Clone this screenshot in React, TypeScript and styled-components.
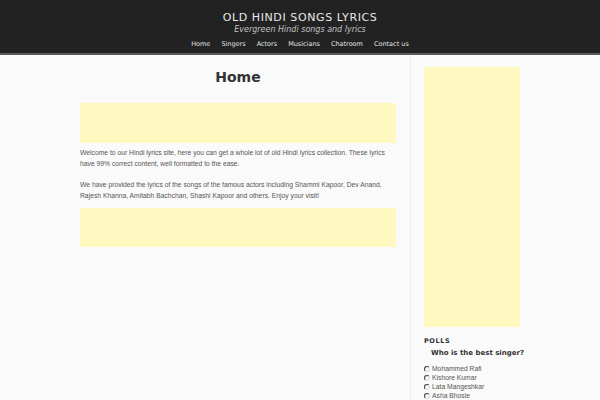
import styled, { createGlobalStyle } from "styled-components";

const GlobalStyle = createGlobalStyle`
  html, body {
    margin: 0;
    padding: 0;
    background: #fafafa;
  }
  body {
    font-family: "DejaVu Sans", sans-serif;
    overflow: hidden;
    -webkit-font-smoothing: antialiased;
  }
`;

const Header = styled.header`
  background: #222222;
  border-bottom: 2px solid #5a5a5a;
  height: 55px;
  display: flex;
  flex-direction: column;
  align-items: center;
  box-sizing: border-box;
  padding-top: 11px;
`;

const SiteTitle = styled.h1`
  margin: 0;
  font-size: 11px;
  font-weight: normal;
  letter-spacing: 0.6px;
  line-height: 13px;
  color: #e8e8e8;
`;

const Tagline = styled.div`
  margin-top: 1px;
  font-size: 8px;
  font-style: italic;
  line-height: 10px;
  color: #c4c4c4;
`;

const Nav = styled.nav`
  margin-top: 5px;
  display: flex;
  gap: 11px;
`;

const NavLink = styled.a`
  font-size: 6.5px;
  line-height: 9px;
  color: #e0e0e0;
  text-decoration: none;
`;

const Body = styled.div`
  display: flex;
  align-items: flex-start;
  padding-left: 80px;
  height: 345px;
  overflow: hidden;
`;

const Main = styled.main`
  width: 316px;
  padding-top: 12px;
`;

const PageTitle = styled.h2`
  margin: 0 0 16px;
  text-align: center;
  font-size: 14px;
  line-height: 20px;
  font-weight: bold;
  color: #333333;
`;

const AdBox = styled.div<{ $h: number }>`
  background: #fff8c0;
  height: ${(p) => p.$h}px;
`;

const Text = styled.p`
  margin: 4px 0 10px;
  font-family: "Liberation Sans", Arial, sans-serif;
  font-size: 6.75px;
  line-height: 11px;
  color: #555555;

  & + & {
    margin-bottom: 7px;
  }
`;

const Sidebar = styled.aside`
  margin-left: 14px;
  border-left: 1px solid #ececec;
  padding: 12px 0 0 13px;
  width: 120px;
  height: 345px;
  box-sizing: border-box;
`;

const SideAd = styled.div`
  width: 96px;
  height: 260px;
  background: #fff8c0;
`;

const WidgetTitle = styled.div`
  margin-top: 10px;
  font-size: 6.5px;
  font-weight: bold;
  letter-spacing: 0.6px;
  color: #333333;
  line-height: 9px;
`;

const Question = styled.div`
  margin: 2px 0 0 7px;
  font-size: 7px;
  font-weight: bold;
  color: #333333;
  line-height: 10px;
`;

const Options = styled.ul`
  list-style: none;
  margin: 6px 0 0;
  padding: 0;
`;

const Option = styled.li`
  display: flex;
  align-items: center;
  gap: 2px;
  height: 9px;
  font-family: "Liberation Sans", Arial, sans-serif;
  font-size: 6.75px;
  color: #555555;
`;

const Radio = styled.span`
  width: 4px;
  height: 4px;
  border-radius: 50%;
  border: 1px solid #e0e0e0;
  border-left-color: #444;
  border-top-color: #444;
`;

const navItems = ["Home", "Singers", "Actors", "Musicians", "Chatroom", "Contact us"];
const singers = ["Mohammed Rafi", "Kishore Kumar", "Lata Mangeshkar", "Asha Bhosle"];

export default function App() {
  return (
    <>
      <GlobalStyle />
      <Header>
        <SiteTitle>OLD HINDI SONGS LYRICS</SiteTitle>
        <Tagline>Evergreen Hindi songs and lyrics</Tagline>
        <Nav>
          {navItems.map((n) => (
            <NavLink key={n} href="#">
              {n}
            </NavLink>
          ))}
        </Nav>
      </Header>
      <Body>
        <Main>
          <PageTitle>Home</PageTitle>
          <AdBox $h={40} />
          <Text>
            Welcome to our Hindi lyrics site, here you can get a whole lot of old Hindi lyrics
            collection. These lyrics have 99% correct content, well formatted to the ease.
          </Text>
          <Text>
            We have provided the lyrics of the songs of the famous actors including Shammi Kapoor,
            Dev Anand, Rajesh Khanna, Amitabh Bachchan, Shashi Kapoor and others. Enjoy your visit!
          </Text>
          <AdBox $h={39} />
        </Main>
        <Sidebar>
          <SideAd />
          <WidgetTitle>POLLS</WidgetTitle>
          <Question>Who is the best singer?</Question>
          <Options>
            {singers.map((s) => (
              <Option key={s}>
                <Radio />
                {s}
              </Option>
            ))}
          </Options>
        </Sidebar>
      </Body>
    </>
  );
}
